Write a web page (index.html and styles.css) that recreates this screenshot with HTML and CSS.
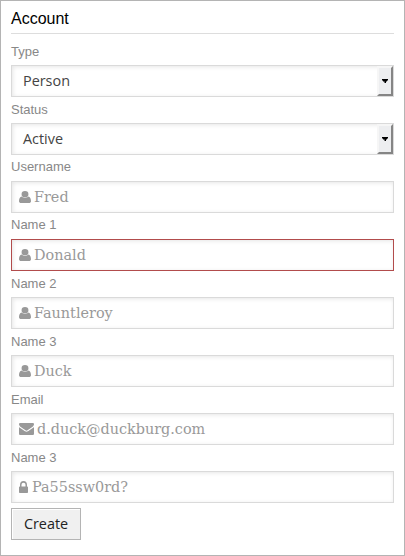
FILE: index.html
```html
<!DOCTYPE html>
<html lang="en">
<head>
<meta charset="utf-8">
<title>Account</title>
<link rel="stylesheet" href="styles.css">
</head>
<body>
<svg class="symbols" aria-hidden="true">
  <symbol id="user" viewBox="0 0 11 12" preserveAspectRatio="none"><path d="M5.5 0a3.15 3.15 0 1 1 0 6.3 3.15 3.15 0 0 1 0-6.3zM2.7 5.4C3.5 6.4 4.4 6.800 5.5 6.800s2-.4 2.800-1.400C10.500 5.600 11 8 11 10.200 11 11.300 10.200 12 9 12H2C.8 12 0 11.300 0 10.200 0 8 .5 5.600 2.700 5.400z"/></symbol>
  <symbol id="mail" viewBox="0 0 14 11" preserveAspectRatio="none"><path d="M0 1.250C0 .5.500 0 1.250 0h11.500C13.500 0 14 .5 14 1.250c0 .9-.6 1.650-1.300 2.150L9 6c-.6.400-1.300 1-2 1s-1.400-.6-2-1L1.300 3.400C.7 3 0 2.100 0 1.250zM0 3.600c.25.250.5.500.8.700l3.800 2.650C5.300 7.450 6.100 8 7 8s1.700-.55 2.400-1.050l3.800-2.650c.3-.2.550-.45.8-.7v6.150c0 .7-.55 1.250-1.250 1.250H1.250C.55 11 0 10.450 0 9.750z"/></symbol>
  <symbol id="lock" viewBox="0 0 9 11" preserveAspectRatio="none"><path fill-rule="evenodd" d="M1 5V3.500a3.500 3.500 0 0 1 7 0V5h.250c.4 0 .750.350.750.750v4.500c0 .4-.35.750-.75.750H.750A.75.750 0 0 1 0 10.250v-4.500C0 5.350.350 5 .750 5zm1.500 0h4V3.500a2 2 0 0 0-4 0z"/></symbol>
</svg>
<form class="panel">
  <h1 class="title">Account</h1>
  <div class="label">Type</div>
  <div class="field select"><span>Person</span><i class="drop"><svg width="6" height="4"><path d="M0 0h6v1.500H5v1H4V4H2.500V2.500H1v-1H0z"/></svg></i></div>
  <div class="label">Status</div>
  <div class="field select"><span>Active</span><i class="drop"><svg width="6" height="4"><path d="M0 0h6v1.500H5v1H4V4H2.500V2.500H1v-1H0z"/></svg></i></div>
  <div class="label tight">Username</div>
  <div class="field"><svg class="user"><use href="#user"/></svg><span>Fred</span></div>
  <div class="label tight">Name 1</div>
  <div class="field error"><svg class="user"><use href="#user"/></svg><span>Donald</span></div>
  <div class="label">Name 2</div>
  <div class="field"><svg class="user"><use href="#user"/></svg><span>Fauntleroy</span></div>
  <div class="label">Name 3</div>
  <div class="field"><svg class="user"><use href="#user"/></svg><span>Duck</span></div>
  <div class="label">Email</div>
  <div class="field"><svg class="mail"><use href="#mail"/></svg><span>d.duck@duckburg.com</span></div>
  <div class="label">Name 3</div>
  <div class="field"><svg class="lock"><use href="#lock"/></svg><span>Pa55ssw0rd?</span></div>
  <button class="create" type="button">Create</button>
</form>
</body>
</html>
```
FILE: styles.css
```css
* { box-sizing: border-box; }
body { margin: 0; background: #fff; }
.symbols { display: none; }
.panel {
  width: 405px;
  height: 556px;
  padding: 0 10px;
  border: 1px solid #b4b4b4;
  font-family: "Liberation Sans", sans-serif;
}
.title {
  height: 33px;
  margin: 0 0 5px;
  border-bottom: 1px solid #ddd;
  font-size: 16px;
  font-weight: 400;
  line-height: 35px;
  color: #000;
}
.label {
  height: 26px;
  font-size: 13px;
  line-height: 26px;
  color: #888;
}
.tight { line-height: 24px; }
.field {
  display: flex;
  align-items: center;
  height: 32px;
  padding-left: 7px;
  border: 1px solid #dadada;
  box-shadow: inset 1px 1px 4px rgba(0, 0, 0, .1);
  font: 14.4px/30px "DejaVu Serif", serif;
  color: #999;
}
.error { border-color: #b24c4c; }
.field svg { flex: none; fill: #999; }
.user { width: 12px; height: 12px; margin-right: 3px; }
.mail { width: 15px; height: 12px; margin-right: 3px; }
.lock { width: 9px; height: 12px; margin-right: 4px; }
.select {
  justify-content: space-between;
  padding-left: 11px;
  font: 14.4px/30px "Open Sans", sans-serif;
  color: #444;
}
.drop {
  display: flex;
  align-items: center;
  justify-content: center;
  width: 16px;
  height: 30px;
  border: 2px solid;
  border-color: #f6f6f6 #858585 #858585 #f6f6f6;
  background: #edeef0;
}
.drop svg { fill: #000; }
.create {
  display: block;
  width: 70px;
  height: 32px;
  margin-top: 5px;
  padding: 0;
  border: 1px solid #b4b4b4;
  background: #f0f0f0;
  box-shadow: inset 1px 1px 0 #fff;
  font: 14.4px/30px "Open Sans", sans-serif;
  color: #222;
}
```
